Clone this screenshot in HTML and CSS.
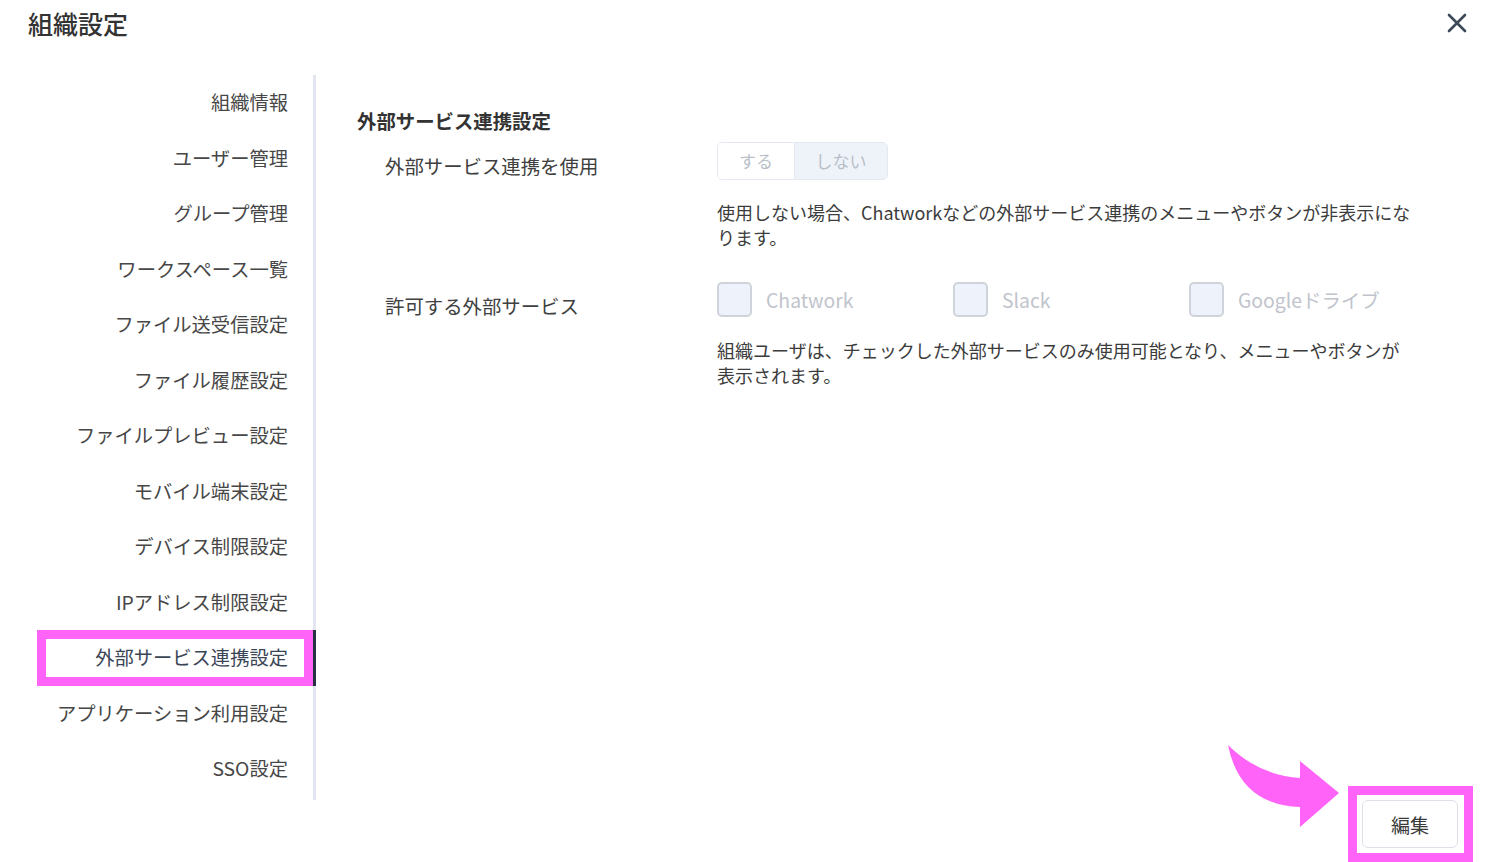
FILE: index.html
```html
<!DOCTYPE html>
<html lang="ja">
<head>
  <meta charset="UTF-8" />
  <meta name="viewport" content="width=device-width, initial-scale=1.0"/>
  <title>組織設定</title>
  <link rel="stylesheet" href="styles.css">
</head>
<body>
  <div class="dialog">
    <header class="dialog-header">
      <h1>組織設定</h1>
      <button class="close-btn" aria-label="閉じる">
        <svg width="20" height="20" viewBox="0 0 20 20"><path d="M2 2 L18 18 M18 2 L2 18" stroke="#3d4858" stroke-width="2.6" stroke-linecap="round" fill="none"/></svg>
      </button>
    </header>

    <div class="layout">
      <ul class="sidebar">
        <li>組織情報</li>
        <li>ユーザー管理</li>
        <li>グループ管理</li>
        <li>ワークスペース一覧</li>
        <li>ファイル送受信設定</li>
        <li>ファイル履歴設定</li>
        <li>ファイルプレビュー設定</li>
        <li>モバイル端末設定</li>
        <li>デバイス制限設定</li>
        <li>IPアドレス制限設定</li>
        <li class="active">外部サービス連携設定</li>
        <li>アプリケーション利用設定</li>
        <li>SSO設定</li>
      </ul>

      <main class="content">
        <h2>外部サービス連携設定</h2>

        <div class="row">
          <div class="label">外部サービス連携を使用</div>
          <div class="field">
            <div class="toggle">
              <span class="seg seg-on">する</span>
              <span class="seg seg-off">しない</span>
            </div>
            <p class="desc">使用しない場合、Chatworkなどの外部サービス連携のメニューやボタンが非表示になります。</p>
          </div>
        </div>

        <div class="row row-services">
          <div class="label">許可する外部サービス</div>
          <div class="field">
            <div class="checks">
              <label class="check"><span class="box"></span>Chatwork</label>
              <label class="check"><span class="box"></span>Slack</label>
              <label class="check"><span class="box"></span>Googleドライブ</label>
            </div>
            <p class="desc desc-services">組織ユーザは、チェックした外部サービスのみ使用可能となり、メニューやボタンが表示されます。</p>
          </div>
        </div>
      </main>
    </div>

    <footer class="dialog-footer">
      <span class="mark">
        <button class="edit-btn">編集</button>
      </span>
    </footer>

    <svg class="pointer" width="130" height="95" viewBox="0 0 130 95">
      <path d="M8 5 Q38 35 80 38 L80 21 L119 53 L80 87 L80 67 Q20 65 8 5 Z" fill="#ff63f7"/>
    </svg>
  </div>
</body>
</html>
```

FILE: styles.css
```css
body {
  font-family: "Noto Sans CJK JP", "Noto Sans", sans-serif;
  margin: 0;
  padding: 0;
  background: #fff;
  color: #3a3a3a;
}

.dialog {
  position: relative;
  width: 1500px;
  height: 862px;
  overflow: hidden;
}

.dialog-header {
  display: flex;
  justify-content: space-between;
  align-items: flex-start;
  height: 75px;
  box-sizing: border-box;
  padding: 5px 33px 0 28px;
}
.dialog-header h1 {
  margin: 0;
  font-size: 25px;
  line-height: 36px;
  font-weight: 500;
  color: #333;
}
.close-btn {
  background: none;
  border: none;
  padding: 0;
  margin-top: 8px;
  cursor: pointer;
}

.layout {
  display: flex;
  height: 725px;
}

/* Sidebar */
.sidebar {
  flex-shrink: 0;
  list-style: none;
  margin: 0;
  padding: 0;
  width: 316px;
  box-sizing: border-box;
  border-right: 3px solid #e1e6f0;
}
.sidebar li {
  margin-left: 37px;
  margin-right: -3px;
  padding-right: 25px;
  border-right: 3px solid transparent;
  text-align: right;
  height: 55.5px;
  line-height: 55.5px;
  font-size: 19.3px;
  color: #474747;
}
.sidebar li.active {
  border-right-color: #263142;
  color: #3a4656;
  box-shadow: inset 0 0 0 9px #ff63f7;
}

/* Content */
.content {
  flex: 1;
  min-width: 0;
  padding: 32px 70px 0 41px;
}
.content h2 {
  margin: 0 0 7px;
  font-size: 19.4px;
  line-height: 28px;
  font-weight: 700;
  color: #333;
}

.row {
  display: grid;
  grid-template-columns: 332px 1fr;
  padding-left: 28px;
}
.row-services {
  margin-top: 32px;
}
.label {
  padding-top: 10px;
  font-size: 19.4px;
  line-height: 28px;
  color: #404040;
}

.toggle {
  display: inline-flex;
  height: 38px;
  box-sizing: border-box;
  border: 1px solid #e4e8f0;
  border-radius: 5px;
  overflow: hidden;
}
.seg {
  text-align: center;
  line-height: 36px;
  font-size: 17px;
  color: #b9bfc9;
}
.seg-on {
  width: 76px;
  background: #fff;
}
.seg-off {
  width: 92px;
  background: #eef2f9;
  border-left: 1px solid #e4e8f0;
}

.desc {
  margin: 20px 0 0;
  max-width: 697px;
  font-size: 18px;
  line-height: 25px;
  color: #3c3c3c;
}
.desc-services {
  margin-top: 21px;
}

.checks {
  display: flex;
  height: 35px;
}
.check {
  display: flex;
  align-items: center;
  gap: 14px;
  width: 236px;
  font-size: 19.4px;
  color: #bfc4cc;
}
.box {
  width: 35px;
  height: 35px;
  box-sizing: border-box;
  border: 2px solid #cfd3da;
  border-radius: 5px;
  background: #eef2fb;
}

/* Footer */
.dialog-footer {
  display: flex;
  justify-content: flex-end;
  margin-top: -14px;
  padding-right: 27px;
}
.mark {
  display: block;
  border: 9px solid #ff63f7;
  padding: 5px 6px 5px 5px;
}
.edit-btn {
  display: block;
  width: 96px;
  height: 48px;
  background: #fff;
  border: 1px solid #dde1e8;
  border-radius: 6px;
  font-family: inherit;
  font-size: 19px;
  color: #3a3a3a;
  cursor: pointer;
}

.pointer {
  position: absolute;
  left: 1220px;
  top: 740px;
}
```
